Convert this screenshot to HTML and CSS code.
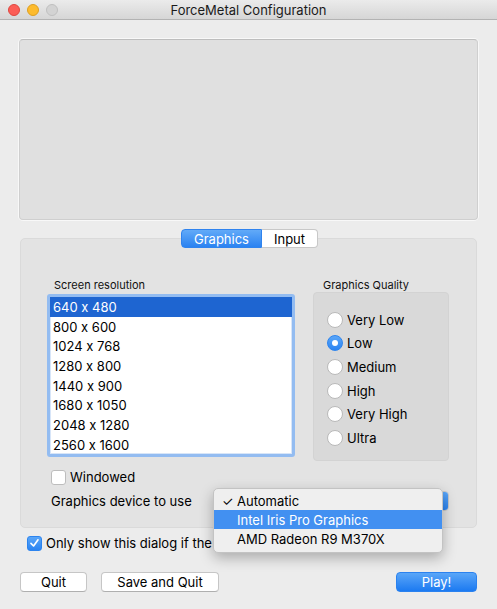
FILE: index.html
```html
<!DOCTYPE html>
<html>
<head>
<meta charset="utf-8">
<link rel="stylesheet" href="styles.css">
</head>
<body>
<div class="window">
  <div class="titlebar">
    <div class="lights">
      <span class="light red"></span>
      <span class="light yellow"></span>
      <span class="light grey"></span>
    </div>
    <div class="title">ForceMetal Configuration</div>
    <div></div>
  </div>
  <div class="main">
    <div class="banner"></div>
    <div class="panel">
      <div class="tabs">
        <div class="tab active">Graphics</div>
        <div class="tab">Input</div>
      </div>
      <div class="cols">
        <div class="col-left">
          <div class="label">Screen resolution</div>
          <div class="list">
            <div class="row selected">640 x 480</div>
            <div class="row">800 x 600</div>
            <div class="row">1024 x 768</div>
            <div class="row">1280 x 800</div>
            <div class="row">1440 x 900</div>
            <div class="row">1680 x 1050</div>
            <div class="row">2048 x 1280</div>
            <div class="row">2560 x 1600</div>
          </div>
        </div>
        <div class="col-right">
          <div class="label label-q">Graphics Quality</div>
          <div class="qbox">
            <div class="radio-row"><span class="radio"></span>Very Low</div>
            <div class="radio-row"><span class="radio on"></span>Low</div>
            <div class="radio-row"><span class="radio"></span>Medium</div>
            <div class="radio-row"><span class="radio"></span>High</div>
            <div class="radio-row"><span class="radio"></span>Very High</div>
            <div class="radio-row"><span class="radio"></span>Ultra</div>
          </div>
        </div>
      </div>
      <div class="check-row windowed"><span class="check"></span>Windowed</div>
      <div class="device-row">
        <span class="device-label">Graphics device to use</span>
        <div class="popup"><span class="popup-text"></span><span class="popup-arrows"></span></div>
        <div class="menu">
          <div class="menu-item"><span class="tick">✓</span>Automatic</div>
          <div class="menu-item hl"><span class="tick"></span>Intel Iris Pro Graphics</div>
          <div class="menu-item"><span class="tick"></span>AMD Radeon R9 M370X</div>
        </div>
      </div>
    </div>
    <div class="check-row only"><span class="check on"><svg viewBox="0 0 14 14" width="14" height="14"><path d="M3.2 7.4 L6 10.2 L10.8 3.6" fill="none" stroke="#fff" stroke-width="1.8" stroke-linecap="round" stroke-linejoin="round"/></svg></span><span class="only-text">Only show this dialog if the</span></div>
    <div class="buttons">
      <div class="btn quit">Quit</div>
      <div class="btn save">Save and Quit</div>
      <div class="spacer"></div>
      <div class="btn play">Play!</div>
    </div>
  </div>
</div>
</body>
</html>
```

FILE: styles.css
```css
html, body {
  margin: 0;
  padding: 0;
}
body {
  width: 497px;
  height: 609px;
  overflow: hidden;
  background: #ececec;
  font-family: Inter, "Liberation Sans", sans-serif;
  font-feature-settings: "calt" 0;
  font-size: 13px;
  color: #000;
}
.window {
  width: 497px;
  height: 609px;
}
.titlebar {
  height: 19px;
  border-bottom: 1px solid #b3b3b3;
  background: linear-gradient(#ebebeb, #d6d6d6);
  display: grid;
  grid-template-columns: 1fr auto 1fr;
  align-items: center;
}
.lights {
  display: flex;
  gap: 7px;
  padding-left: 8px;
}
.light {
  width: 12px;
  height: 12px;
  border-radius: 50%;
  box-sizing: border-box;
}
.red { background: #fc5d56; border: 1px solid #de4740; }
.yellow { background: #fdbb2d; border: 1px solid #dd9f22; }
.grey { background: #d3d3d3; border: 1px solid #c0c0c0; }
.title {
  font-size: 13px;
  color: #1a1a1a;
}
.main {
  padding: 19px 19px 0 19px;
}
.banner {
  width: 459px;
  height: 181px;
  box-sizing: border-box;
  background: #e0e0e0;
  border: 1px solid #cfcfcf;
  border-top-color: #bdbdbd;
  border-radius: 4px;
  box-shadow: 0 0 0 1px #f8f8f8;
}
.panel {
  margin-top: 18px;
  margin-left: 1px;
  width: 457px;
  height: 290px;
  box-sizing: border-box;
  background: #e3e3e3;
  border: 1px solid #dadada;
  border-radius: 5px;
  position: relative;
}
.tabs {
  display: flex;
  justify-content: center;
  margin-top: -10px;
  margin-left: 2px;
}
.tab {
  height: 19px;
  line-height: 18px;
  box-sizing: border-box;
  text-align: center;
  font-size: 13px;
  background: #fff;
  border: 1px solid #c8c8c8;
  color: #000;
}
.tab.active {
  width: 81px;
  background: linear-gradient(#62aaf8, #2a82f1);
  border-color: #2f83ee;
  color: #fff;
  border-radius: 4px 0 0 4px;
}
.tab:not(.active) {
  width: 56px;
  border-left: none;
  border-radius: 0 4px 4px 0;
}
.cols {
  display: flex;
  gap: 18px;
  margin-top: 31px;
  padding-left: 26px;
}
.col-left {
  width: 248px;
}
.col-right {
  width: 136px;
}
.label {
  font-size: 11px;
  line-height: 13px;
  color: #111;
  padding-left: 7px;
  margin-bottom: 2px;
}
.label-q {
  padding-left: 10px;
  margin-bottom: 0;
}
.list {
  width: 248px;
  height: 163px;
  box-sizing: border-box;
  background: #fff;
  border: 3px solid #93bcf1;
  border-radius: 3px;
  box-shadow: inset 0 0 0 1px #d7e5f8;
}
.row {
  height: 19.7px;
  line-height: 20.5px;
  padding-left: 3px;
  font-size: 13px;
}
.row.selected {
  background: #1e65d1;
  color: #fff;
}
.qbox {
  height: 169px;
  box-sizing: border-box;
  background: #d9d9d9;
  border: 1px solid #d3d3d3;
  border-radius: 4px;
  padding-top: 15px;
  padding-left: 13px;
}
.radio-row {
  height: 23.6px;
  display: flex;
  align-items: center;
  gap: 4px;
  font-size: 13px;
}
.radio {
  width: 16px;
  height: 16px;
  box-sizing: border-box;
  border-radius: 50%;
  background: #fff;
  border: 1px solid #b9b9b9;
  display: inline-flex;
  align-items: center;
  justify-content: center;
}
.radio.on {
  background: linear-gradient(#5aa6f8, #2b84f2);
  border-color: #2c84ef;
}
.radio.on::after {
  content: "";
  width: 6px;
  height: 6px;
  border-radius: 50%;
  background: #fff;
}
.check-row {
  display: flex;
  align-items: center;
  gap: 4px;
  font-size: 13px;
  height: 16px;
}
.check {
  width: 15px;
  height: 15px;
  flex: none;
  box-sizing: border-box;
  background: #fff;
  border: 1px solid #bdbdbd;
  border-radius: 3px;
  display: inline-flex;
  align-items: center;
  justify-content: center;
}
.check.on {
  background: linear-gradient(#5aa6f8, #2b84f2);
  border-color: #2c84ef;
}
.windowed {
  margin-top: 8px;
  padding-left: 30px;
}
.device-row {
  position: relative;
  margin-top: 6px;
  margin-left: 30px;
  height: 20px;
  display: flex;
  align-items: center;
}
.device-label {
  font-size: 13px;
  width: 171px;
}
.popup {
  width: 227px;
  height: 20px;
  box-sizing: border-box;
  background: #fff;
  border: 1px solid #c8c8c8;
  border-radius: 4px;
  display: flex;
  overflow: hidden;
}
.popup-text {
  flex: 1;
}
.popup-arrows {
  width: 17px;
  background: linear-gradient(#5aa6f8, #2b84f2);
}
.menu {
  position: absolute;
  left: 162px;
  top: -3px;
  width: 230px;
  box-sizing: border-box;
  padding: 2px 0 4px;
  background: #efefef;
  border: 1px solid #c3c3c3;
  border-radius: 5px;
  box-shadow: 0 5px 14px rgba(0,0,0,0.28);
  z-index: 5;
}
.menu-item {
  height: 19px;
  line-height: 20px;
  display: flex;
  font-size: 13px;
}
.menu-item.hl {
  background: #4290f1;
  color: #fff;
}
.tick {
  width: 23px;
  padding-left: 8px;
  box-sizing: border-box;
  font-size: 13px;
}
.only {
  margin-top: 7px;
  padding-left: 8px;
}
.only-text {
  white-space: nowrap;
}
.buttons {
  display: flex;
  align-items: center;
  margin-top: 21px;
  margin-left: 1px;
  width: 457px;
}
.btn {
  height: 20px;
  line-height: 18px;
  box-sizing: border-box;
  text-align: center;
  font-size: 13px;
  background: #fff;
  border: 1px solid #c6c6c6;
  border-bottom-color: #afafaf;
  border-radius: 4px;
}
.quit { width: 67px; }
.save { width: 118px; margin-left: 14px; }
.spacer { flex: 1; }
.play {
  width: 81px;
  color: #fff;
  background: linear-gradient(#5aa6f8, #1c7af1);
  border-color: #2b82ef;
}
```
